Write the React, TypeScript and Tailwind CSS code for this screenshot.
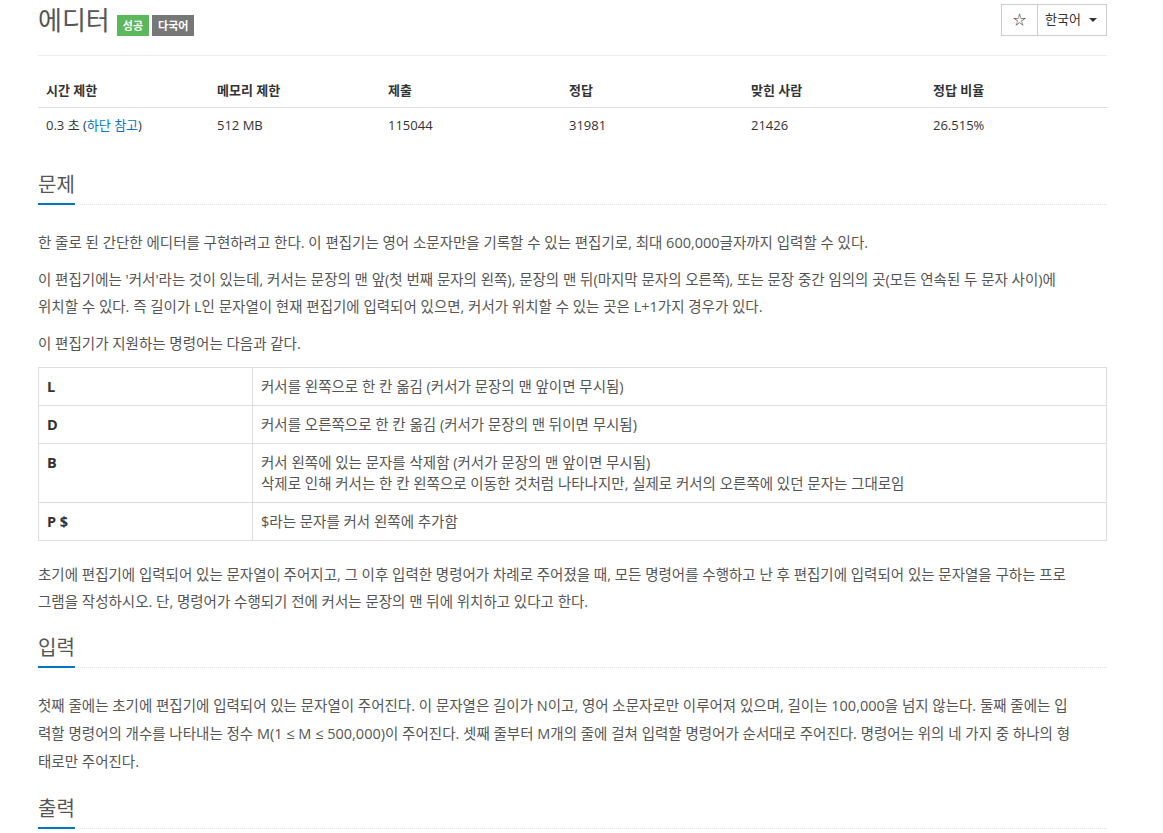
import { useState } from 'react'

const stats = [
  { label: '시간 제한', w: 'w-[171px]' },
  { label: '메모리 제한', w: 'w-[171px]' },
  { label: '제출', w: 'w-[181px]' },
  { label: '정답', w: 'w-[182px]' },
  { label: '맞힌 사람', w: 'w-[182px]' },
  { label: '정답 비율', w: 'w-[182px]' },
]

const commands = [
  { key: 'L', desc: ['커서를 왼쪽으로 한 칸 옮김 (커서가 문장의 맨 앞이면 무시됨)'] },
  { key: 'D', desc: ['커서를 오른쪽으로 한 칸 옮김 (커서가 문장의 맨 뒤이면 무시됨)'] },
  {
    key: 'B',
    desc: [
      '커서 왼쪽에 있는 문자를 삭제함 (커서가 문장의 맨 앞이면 무시됨)',
      '삭제로 인해 커서는 한 칸 왼쪽으로 이동한 것처럼 나타나지만, 실제로 커서의 오른쪽에 있던 문자는 그대로임',
    ],
  },
  { key: 'P $', desc: ['$라는 문자를 커서 왼쪽에 추가함'] },
]

// each entry is one rendered line, so the text breaks where the original does
function Para({ lines, className = '' }: { lines: string[]; className?: string }) {
  return (
    <p className={`mb-[10px] whitespace-nowrap ${className}`}>
      {lines.map((l, i) => (
        <span key={i}>
          {i > 0 && <br />}
          {l}
        </span>
      ))}
    </p>
  )
}

function Headline({ title }: { title: string }) {
  return (
    <div className="mt-[21px] mb-[24px] border-b border-dotted border-[#dfe3ea]">
      <h2 className="text-[20px] leading-[24px] text-[#555]">
        <span className="inline-block border-b-2 border-[#0076c0] pb-[6px] -mb-px">{title}</span>
      </h2>
    </div>
  )
}

function App() {
  const [starred, setStarred] = useState(false)

  return (
    <div className="min-h-screen bg-white font-['Open_Sans','Noto_Sans_CJK_KR',sans-serif] text-[14.5px] text-[#555]">
      <div className="w-[1069px] ml-[38px]">
        {/* page header */}
        <div className="flex items-start justify-between border-b border-[#eee] h-[56px]">
          <h1 className="pt-[3px] text-[26px] leading-[34px] text-[#555] font-normal">
            에디터
            <span className="ml-[7px] inline-block align-baseline bg-[#5cb85c] px-[6px] text-[11px] leading-[21px] font-bold text-white">
              성공
            </span>
            <span className="ml-[3px] inline-block align-baseline bg-[#777] px-[6px] text-[11px] leading-[21px] font-bold text-white">
              다국어
            </span>
          </h1>
          <div className="mt-[4px] flex h-[32px] border border-[#ccc] text-[13px] text-[#333]">
            <button
              className="flex w-[36px] items-center justify-center border-r border-[#ccc] text-[13px]"
              onClick={() => setStarred(!starred)}
            >
              {starred ? '★' : '☆'}
            </button>
            <button className="flex items-center gap-[8px] pl-[7px] pr-[9px]">
              한국어
              <span className="inline-block border-x-[4px] border-t-[4px] border-x-transparent border-t-[#333]" />
            </button>
          </div>
        </div>

        {/* stats */}
        <table className="mt-[17px] w-full table-fixed border-collapse text-[13px]">
          <thead>
            <tr>
              {stats.map((s) => (
                <th
                  key={s.label}
                  className={`${s.w} border-b border-[#ddd] px-[8px] py-[8px] text-left font-bold leading-[18px] text-[#333]`}
                >
                  {s.label}
                </th>
              ))}
            </tr>
          </thead>
          <tbody>
            <tr className="text-[#333]">
              <td className="px-[8px] py-[8px] leading-[18px]">
                0.3 초 (<a className="text-[#0076c0]">하단 참고</a>)
              </td>
              <td className="px-[8px] py-[8px] leading-[18px]">512 MB</td>
              <td className="px-[8px] py-[8px] leading-[18px]">115044</td>
              <td className="px-[8px] py-[8px] leading-[18px]">31981</td>
              <td className="px-[8px] py-[8px] leading-[18px]">21426</td>
              <td className="px-[8px] py-[8px] leading-[18px]">26.515%</td>
            </tr>
          </tbody>
        </table>

        {/* 문제 */}
        <div className="mt-[31px]">
          <Headline title="문제" />
          <div className="leading-[27px]">
            <Para
              lines={[
                '한 줄로 된 간단한 에디터를 구현하려고 한다. 이 편집기는 영어 소문자만을 기록할 수 있는 편집기로, 최대 600,000글자까지 입력할 수 있다.',
              ]}
            />
            <Para
              lines={[
                "이 편집기에는 '커서'라는 것이 있는데, 커서는 문장의 맨 앞(첫 번째 문자의 왼쪽), 문장의 맨 뒤(마지막 문자의 오른쪽), 또는 문장 중간 임의의 곳(모든 연속된 두 문자 사이)에",
                '위치할 수 있다. 즉 길이가 L인 문자열이 현재 편집기에 입력되어 있으면, 커서가 위치할 수 있는 곳은 L+1가지 경우가 있다.',
              ]}
            />
            <Para lines={['이 편집기가 지원하는 명령어는 다음과 같다.']} />
            <table className="mt-[4px] mb-[20px] w-full table-fixed border-collapse">
              <tbody>
                {commands.map((c) => (
                  <tr key={c.key}>
                    <td className="w-[214px] border border-[#ddd] px-[8px] py-[8px] align-top font-bold leading-[21px] text-[#333]">
                      {c.key}
                    </td>
                    <td className="border border-[#ddd] px-[8px] py-[8px] align-top leading-[21px]">
                      {c.desc.map((d) => (
                        <div key={d}>{d}</div>
                      ))}
                    </td>
                  </tr>
                ))}
              </tbody>
            </table>
            <Para
              lines={[
                '초기에 편집기에 입력되어 있는 문자열이 주어지고, 그 이후 입력한 명령어가 차례로 주어졌을 때, 모든 명령어를 수행하고 난 후 편집기에 입력되어 있는 문자열을 구하는 프로',
                '그램을 작성하시오. 단, 명령어가 수행되기 전에 커서는 문장의 맨 뒤에 위치하고 있다고 한다.',
              ]}
            />
          </div>
        </div>

        {/* 입력 */}
        <div className="mt-[3px]">
          <Headline title="입력" />
          <div className="leading-[28px]">
            <Para
              lines={[
                '첫째 줄에는 초기에 편집기에 입력되어 있는 문자열이 주어진다. 이 문자열은 길이가 N이고, 영어 소문자로만 이루어져 있으며, 길이는 100,000을 넘지 않는다. 둘째 줄에는 입',
                '력할 명령어의 개수를 나타내는 정수 M(1 ≤ M ≤ 500,000)이 주어진다. 셋째 줄부터 M개의 줄에 걸쳐 입력할 명령어가 순서대로 주어진다. 명령어는 위의 네 가지 중 하나의 형',
                '태로만 주어진다.',
              ]}
            />
          </div>
        </div>

        {/* 출력 */}
        <div className="mt-[1px]">
          <Headline title="출력" />
        </div>
      </div>
    </div>
  )
}

export default App
